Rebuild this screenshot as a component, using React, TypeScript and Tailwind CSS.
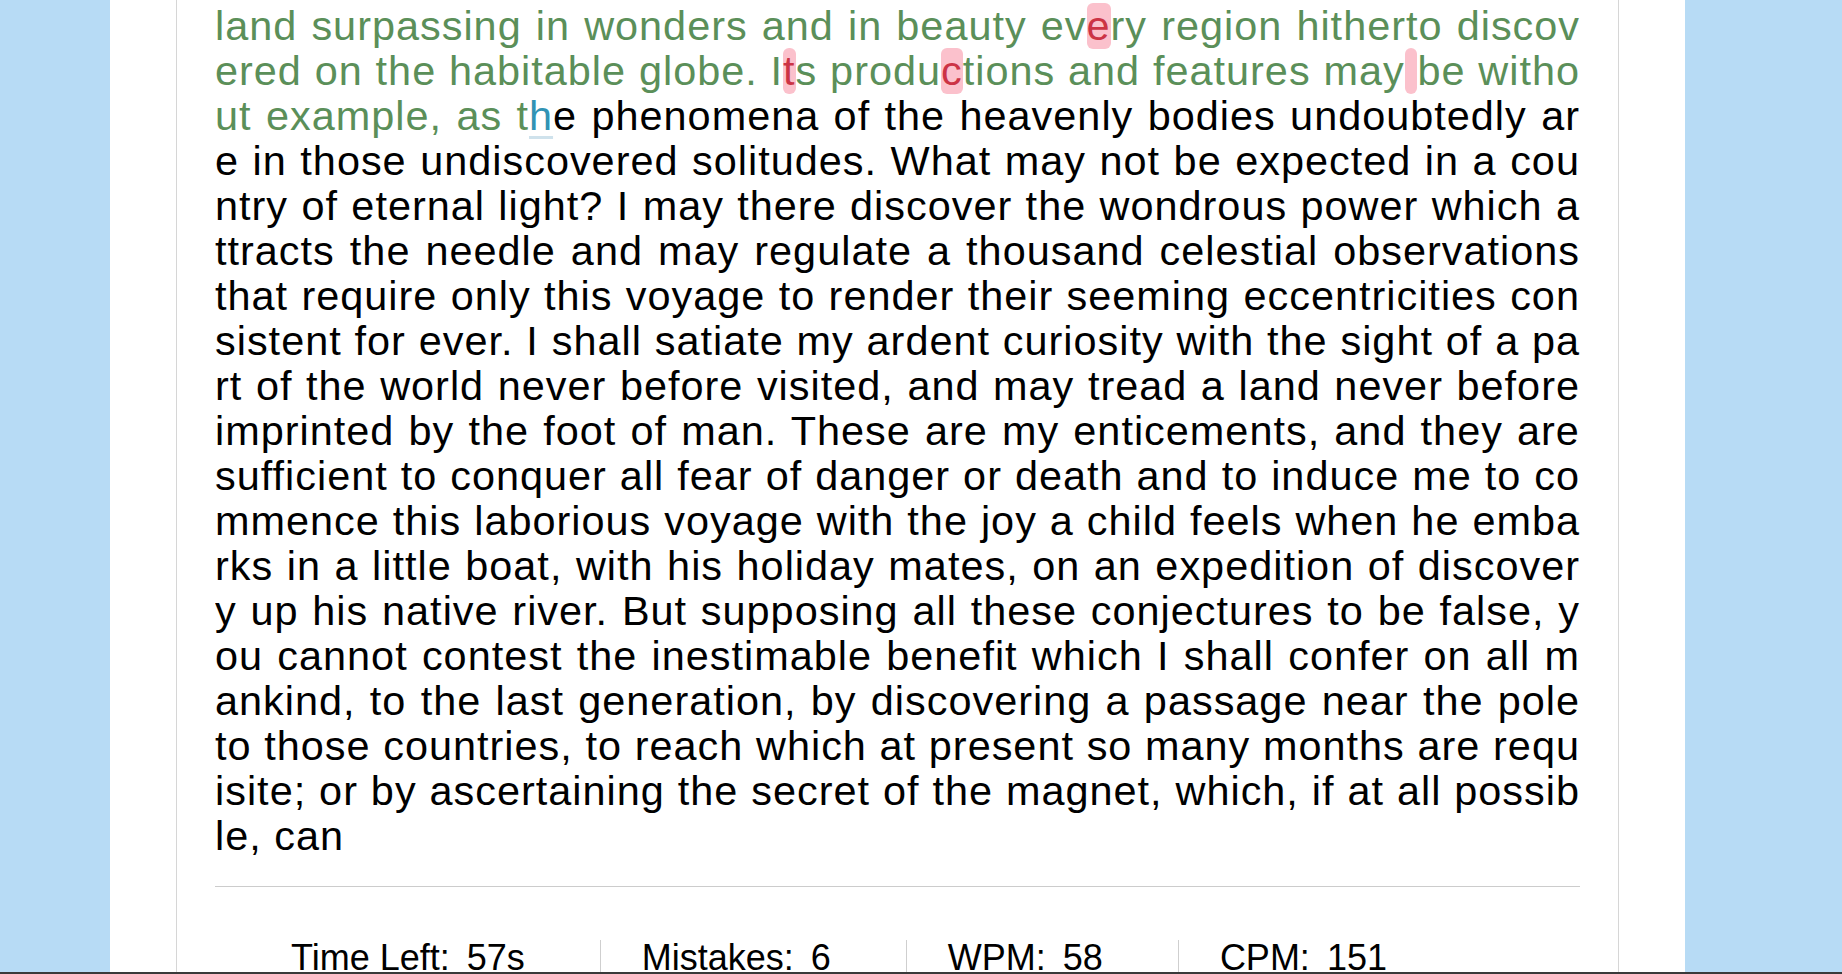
import React from 'react';

const passage =
  "land surpassing in wonders and in beauty every region hitherto discovered on the habitable globe. Its productions and features may be without example, as the phenomena of the heavenly bodies undoubtedly are in those undiscovered solitudes. What may not be expected in a country of eternal light? I may there discover the wondrous power which attracts the needle and may regulate a thousand celestial observations that require only this voyage to render their seeming eccentricities consistent for ever. I shall satiate my ardent curiosity with the sight of a part of the world never before visited, and may tread a land never before imprinted by the foot of man. These are my enticements, and they are sufficient to conquer all fear of danger or death and to induce me to commence this laborious voyage with the joy a child feels when he embarks in a little boat, with his holiday mates, on an expedition of discovery up his native river. But supposing all these conjectures to be false, you cannot contest the inestimable benefit which I shall confer on all mankind, to the last generation, by discovering a passage near the pole to those countries, to reach which at present so many months are requisite; or by ascertaining the secret of the magnet, which, if at all possible, can";

// where the typist currently is
const cursor = passage.indexOf('as the phenomena') + 4;

// wrongly typed characters
const mistakes = new Set<number>([
  passage.indexOf('every') + 2,
  passage.indexOf('Its') + 1,
  passage.indexOf('productions') + 5,
  passage.indexOf('may be witho') + 3,
]);

const stats = [
  { label: 'Time Left:', value: '57s' },
  { label: 'Mistakes:', value: '6' },
  { label: 'WPM:', value: '58' },
  { label: 'CPM:', value: '151' },
];

function Char({ ch, index }: { ch: string; index: number }) {
  if (index === cursor) {
    return (
      <span className="text-[#3193b4] underline decoration-[#cfe2ec] decoration-[3px] underline-offset-[6px]">
        {ch}
      </span>
    );
  }
  if (index < cursor) {
    if (mistakes.has(index)) {
      return <span className="text-[#cc3345] bg-[#fbc1cc] rounded-[6px]">{ch}</span>;
    }
    return <span className="text-[#5b8f59]">{ch}</span>;
  }
  return <span className="text-black">{ch}</span>;
}

export default function App() {
  return (
    <div className="h-[974px] overflow-hidden bg-[#b7dbf5] border-b-2 border-[#3a3a3a] font-['Liberation_Sans',Arial,sans-serif]">
      <div className="ml-[110px] w-[1575px] h-full bg-white px-[66px]">
        <div className="h-full border-x border-[#d6d6d6] px-[38px]">
          {/* Typing area */}
          <p className="h-[855px] pt-[4px] overflow-hidden text-[41.42px] leading-[45px] tracking-[1px] text-justify break-all">
            {passage.split('').map((ch, i) => (
              <Char key={i} ch={ch} index={i} />
            ))}
          </p>

          <hr className="mt-[31px] border-t border-[#cccccc]" />

          {/* Result details */}
          <ul className="flex mt-[53px] ml-[35px] text-[36px] leading-[36px] text-black">
            {stats.map((s, i) => (
              <li
                key={s.label}
                className={`flex gap-[17px] pl-[41px] ${i < stats.length - 1 ? 'pr-[75px] border-r border-[#cfcfcf]' : ''}`}
              >
                <span>{s.label}</span>
                <span>{s.value}</span>
              </li>
            ))}
          </ul>
        </div>
      </div>
    </div>
  );
}
